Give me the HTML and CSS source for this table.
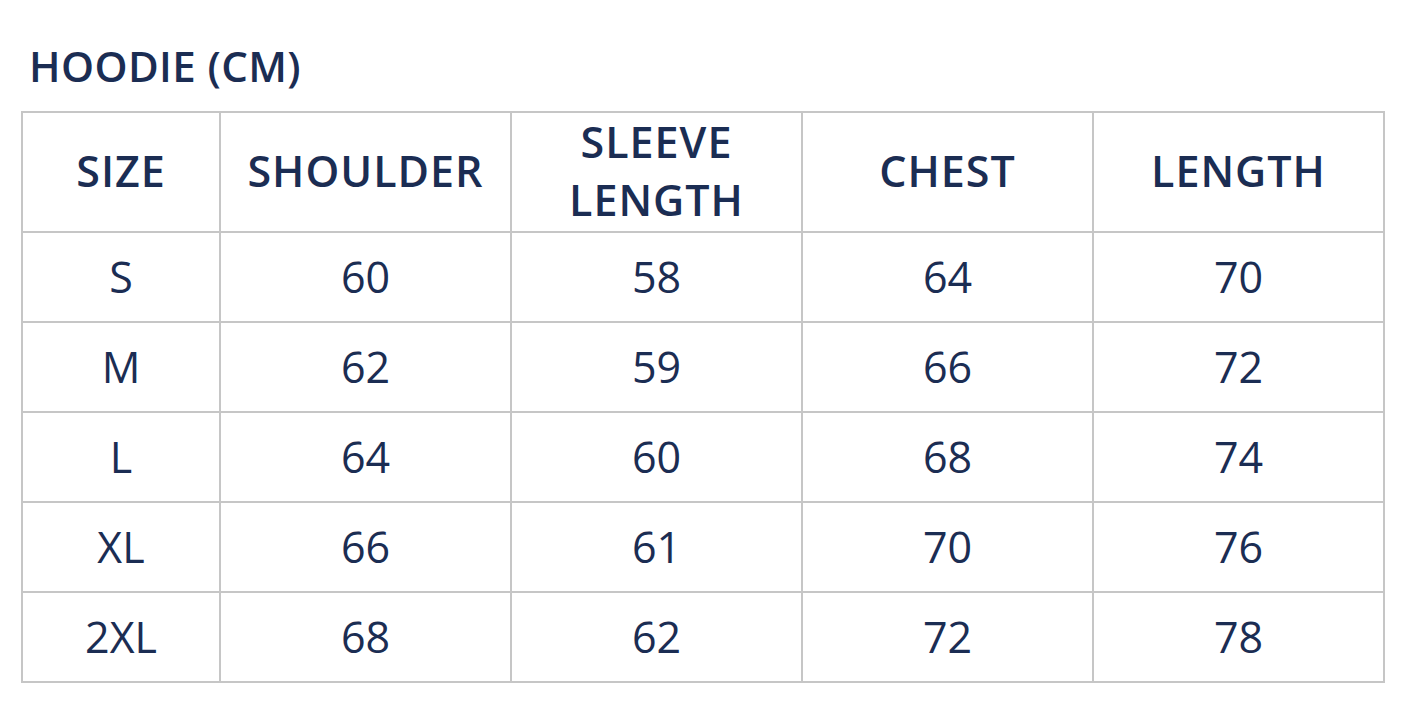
FILE: index.html
```html
<!DOCTYPE html>
<html lang="en">
<head>
<meta charset="utf-8">
<title>Hoodie size chart</title>
<link rel="stylesheet" href="styles.css">
</head>
<body>
<div class="page">
  <h2 class="title">HOODIE (CM)</h2>
  <table class="chart">
    <colgroup>
      <col class="c-size"><col class="c-wide"><col class="c-wide"><col class="c-wide"><col class="c-wide">
    </colgroup>
    <thead>
      <tr><th>SIZE</th><th>SHOULDER</th><th>SLEEVE<br>LENGTH</th><th>CHEST</th><th>LENGTH</th></tr>
    </thead>
    <tbody>
      <tr><td>S</td><td>60</td><td>58</td><td>64</td><td>70</td></tr>
      <tr><td>M</td><td>62</td><td>59</td><td>66</td><td>72</td></tr>
      <tr><td>L</td><td>64</td><td>60</td><td>68</td><td>74</td></tr>
      <tr><td>XL</td><td>66</td><td>61</td><td>70</td><td>76</td></tr>
      <tr><td>2XL</td><td>68</td><td>62</td><td>72</td><td>78</td></tr>
    </tbody>
  </table>
</div>
</body>
</html>
```
FILE: styles.css
```css
html, body {
  margin: 0;
  padding: 0;
  background: #ffffff;
}
.page {
  padding: 37px 0 0 21px;
  font-family: "Open Sans", "Liberation Sans", sans-serif;
  color: #1b2d53;
}
.title {
  margin: 0 0 17px 8px;
  font-size: 42px;
  font-weight: 600;
  line-height: 57px;
  letter-spacing: 0.4px;
}
.chart {
  border-collapse: collapse;
  table-layout: fixed;
  width: 1364px;
}
.c-size { width: 198px; }
.c-wide { width: 291px; }
.chart th,
.chart td {
  border: 2px solid #c6c6c6;
  text-align: center;
  vertical-align: middle;
  padding: 0;
}
.chart th {
  height: 116px;
  padding-bottom: 2px;
  font-size: 43px;
  font-weight: 600;
  line-height: 58px;
  letter-spacing: 1px;
}
.chart td {
  height: 88px;
  font-size: 43px;
  font-weight: 400;
  line-height: 50px;
}
```
